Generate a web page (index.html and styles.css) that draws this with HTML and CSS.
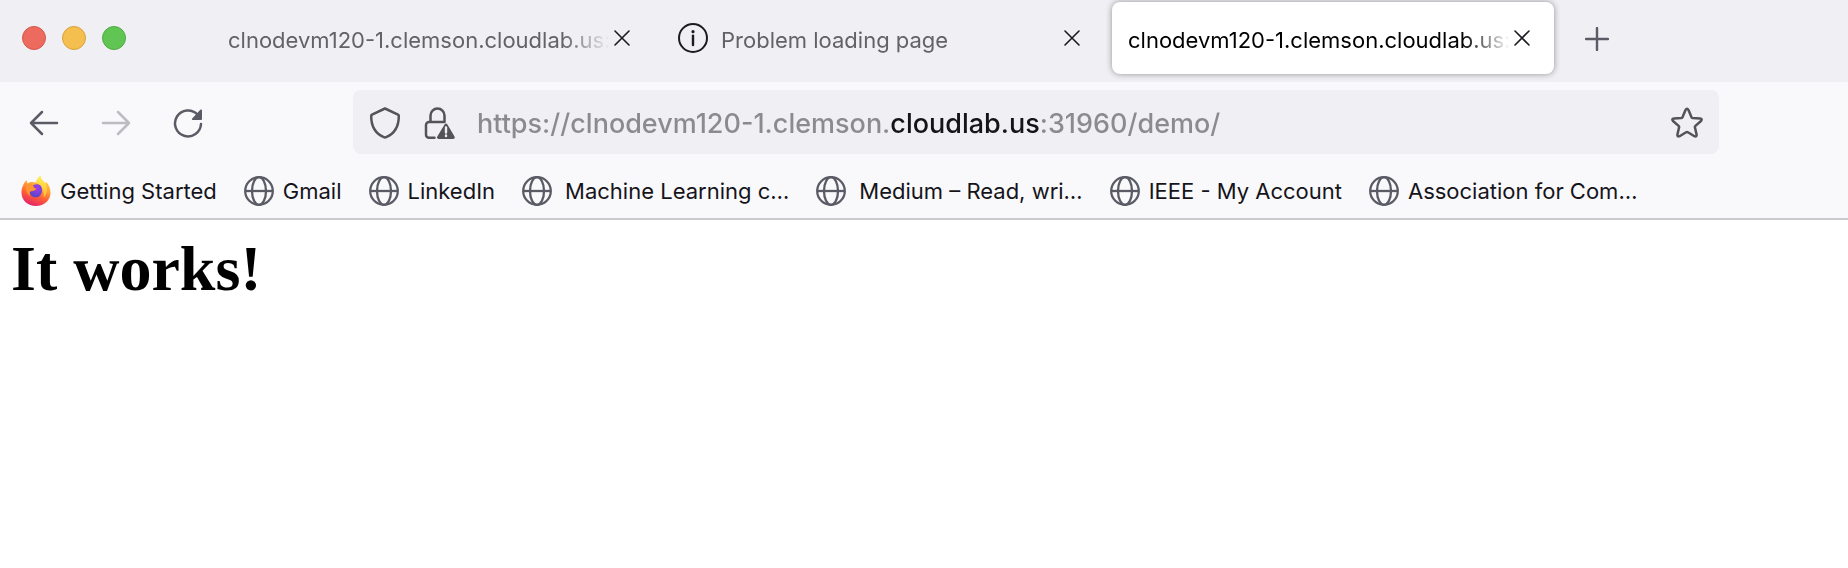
FILE: index.html
```html
<!DOCTYPE html>
<html lang="en">
<head>
<meta charset="utf-8">
<title>It works!</title>
<link rel="stylesheet" href="styles.css">
</head>
<body>
<svg class="symbols" aria-hidden="true">
  <symbol id="close" viewBox="0 0 16 16"><path d="M1 1l14 14M15 1L1 15" fill="none" stroke="currentColor" stroke-width="1.6" stroke-linecap="round"/></symbol>
  <symbol id="globe" viewBox="0 0 30 30"><g fill="none" stroke="currentColor" stroke-width="2.3"><circle cx="15" cy="15" r="13.8"/><ellipse cx="15" cy="15" rx="7" ry="13.8"/><path d="M1 15h28"/></g></symbol>
</svg>
<header class="chrome">
  <div class="tabstrip">
    <div class="window-controls">
      <button class="light light-close" aria-label="Close window"></button>
      <button class="light light-min" aria-label="Minimize window"></button>
      <button class="light light-zoom" aria-label="Zoom window"></button>
    </div>
    <div class="tabs">
      <div class="tab">
        <span class="tab-label">clnodevm120-1.clemson.cloudlab.us:</span>
        <button class="tab-close" aria-label="Close tab"><svg class="icon-close"><use href="#close"/></svg></button>
      </div>
      <div class="tab">
        <svg class="icon-info" viewBox="0 0 30 30" aria-hidden="true"><circle cx="15" cy="15" r="14" fill="none" stroke="currentColor" stroke-width="2"/><circle cx="15" cy="8.7" r="1.6" fill="currentColor"/><path d="M15 12.6v9.4" stroke="currentColor" stroke-width="2.4" stroke-linecap="round"/></svg>
        <span class="tab-label">Problem loading page</span>
        <button class="tab-close" aria-label="Close tab"><svg class="icon-close"><use href="#close"/></svg></button>
      </div>
      <div class="tab tab-active">
        <span class="tab-label">clnodevm120-1.clemson.cloudlab.us:</span>
        <button class="tab-close" aria-label="Close tab"><svg class="icon-close"><use href="#close"/></svg></button>
      </div>
    </div>
    <button class="new-tab" aria-label="New tab"><svg class="icon-plus" viewBox="0 0 24 24"><path d="M12 1v22M1 12h22" stroke="currentColor" stroke-width="2.4" stroke-linecap="round"/></svg></button>
  </div>

  <div class="navbar">
    <div class="nav-buttons">
      <button class="nav-button" aria-label="Back"><svg class="icon-nav" viewBox="0 0 32 32"><path d="M29 16H3M14 5L3 16l11 11" class="line"/></svg></button>
      <button class="nav-button" aria-label="Forward" disabled><svg class="icon-nav" viewBox="0 0 32 32"><path d="M3 16h26M18 5l11 11-11 11" class="line"/></svg></button>
      <button class="nav-button" aria-label="Reload"><svg class="icon-nav" viewBox="0 0 32 32"><path d="M25.500 7.500A13 13 0 1 0 29 17" class="line"/><path d="M30 3.400v8.600a1 1 0 0 1-1 1h-8.100c-.9 0-1.300-1-.7-1.600l8.100-8.600c.6-.6 1.700-.3 1.700.6z" fill="currentColor"/></svg></button>
    </div>
    <div class="urlbar">
      <button class="url-icon" aria-label="Tracking protection"><svg class="icon-url" viewBox="0 0 32 32"><path d="M16 1.500L29 7.600c.5.300.8.700.8 1.300 0 10-4 17.500-12.600 21.200q-1.200.6-2.400 0C6.200 26.400 2.200 18.900 2.200 8.900c0-.6.3-1 .8-1.300z" class="line"/></svg></button>
      <button class="url-icon" aria-label="Site information"><svg class="icon-url" viewBox="0 0 32 32"><path d="M21.500 15v-6.500a7 7 0 0 0-14 0V15M11.500 30.700H6a3 3 0 0 1-3-3V18a3 3 0 0 1 3-3h15.500" class="line"/><path d="M21.700 17.200L14.300 29.600c-.7 1.200 0 2.400 1.300 2.400h14.600c1.300 0 2-1.200 1.300-2.400L24.300 17.200c-.6-1-2-1-2.600 0z" fill="currentColor"/><path d="M23 20.500v5M23 28.500v.6" stroke="#f0eff4" stroke-width="2.400" stroke-linecap="round"/></svg></button>
      <input class="url-input" type="text" aria-label="Address" value="https://clnodevm120-1.clemson.cloudlab.us:31960/demo/">
      <button class="url-icon" aria-label="Bookmark this page"><svg class="icon-url" viewBox="0 0 32 32"><path d="M14.500 3Q16 .3 17.500 3l3 7.200q.3.700 1.100.8l7.400.4q2.700.4 1 2.600l-5.600 4.900q-.6.600-.5 1.400l1.700 7.300q.3 2.700-2.200 1.600l-6.500-3.900q-.9-.5-1.800 0l-6.500 3.900q-2.500 1.100-2.200-1.600l1.700-7.300q.1-.8-.5-1.400L2 14q-1.700-2.200 1-2.600l7.400-.4q.8-.1 1.100-.8z" class="line"/></svg></button>
    </div>
  </div>

  <nav class="bookmarks" aria-label="Bookmarks">
    <a class="bookmark" href="#"><svg class="icon-bookmark" viewBox="0 0 30 31" aria-hidden="true">
      <defs>
        <linearGradient id="fox" x1=".8" y1="0" x2=".4" y2="1"><stop offset="0" stop-color="#ffe44f"/><stop offset=".4" stop-color="#ffa436"/><stop offset=".7" stop-color="#ff5b36"/><stop offset="1" stop-color="#e3256b"/></linearGradient>
        <linearGradient id="flame" x1=".5" y1="0" x2=".4" y2="1"><stop offset="0" stop-color="#fff44f"/><stop offset="1" stop-color="#ffb13c"/></linearGradient>
        <radialGradient id="orb" cx=".6" cy=".3" r=".7"><stop offset="0" stop-color="#a63ce8"/><stop offset="1" stop-color="#5547c8"/></radialGradient>
      </defs>
      <path d="M2.500 8C3 6.500 4.500 5.200 5.500 4.500c0 1.500.3 2.500 1 3.300C10 5 13 6.500 15.500 7 15 4 17.500 1.500 19.500 0c.3 3.500 2.500 4.500 5 7.500.7-.1.800-.7.800-1.500 3.500 3.500 4.700 7.500 4.700 11.200C30 25 23.500 31 15 31S0 25 0 17c0-3.500 1-6.500 2.500-9z" fill="url(#fox)"/>
      <path d="M19.500 0c.3 3.500 2.500 4.500 5 7.500 3 4 2 12-1.500 15 .5-6-1-12-7.500-15.500C15 4 17.500 1.500 19.500 0z" fill="url(#flame)"/>
      <path d="M12 9.500c4-2 7.500-1 8.500 1.500 2 5-.5 11-5.500 11s-6.500-3-6.300-6c1.600-.2 4.800-.5 5.800-2.300-1.300-.2-2.700-1.700-2.500-4.200z" fill="url(#orb)"/>
      <path d="M5 9c2.500-2 5-1.500 7 .2 0 2 1.300 3.600 3.500 3.900-1.300 2.100-5 1.900-6.500 2.900-1.300.9-.8 3.300.7 4.500-4-1-6-6.500-4.700-11.500z" fill="#ff9433"/>
    </svg><span class="bookmark-label">Getting Started</span></a>
    <a class="bookmark" href="#"><svg class="icon-bookmark" aria-hidden="true"><use href="#globe"/></svg><span class="bookmark-label">Gmail</span></a>
    <a class="bookmark" href="#"><svg class="icon-bookmark" aria-hidden="true"><use href="#globe"/></svg><span class="bookmark-label">LinkedIn</span></a>
    <a class="bookmark" href="#"><svg class="icon-bookmark" aria-hidden="true"><use href="#globe"/></svg><span class="bookmark-label cropped">Machine Learning c…</span></a>
    <a class="bookmark" href="#"><svg class="icon-bookmark" aria-hidden="true"><use href="#globe"/></svg><span class="bookmark-label cropped">Medium – Read, wri…</span></a>
    <a class="bookmark" href="#"><svg class="icon-bookmark" aria-hidden="true"><use href="#globe"/></svg><span class="bookmark-label">IEEE - My Account</span></a>
    <a class="bookmark" href="#"><svg class="icon-bookmark" aria-hidden="true"><use href="#globe"/></svg><span class="bookmark-label">Association for Com…</span></a>
  </nav>
</header>
<main class="page">
  <h1 class="page-title">It works!</h1>
</main>
</body>
</html>
```
FILE: styles.css
```css
* {
  box-sizing: border-box;
}

body {
  margin: 0;
  background: #fff;
  color: #15141a;
  font-family: Inter, "Liberation Sans", sans-serif;
  font-size: 22px;
}

button {
  display: flex;
  align-items: center;
  justify-content: center;
  padding: 0;
  border: 0;
  background: none;
  color: #5b5b66;
}

.symbols {
  position: absolute;
  width: 0;
  height: 0;
}

.line {
  fill: none;
  stroke: currentColor;
  stroke-width: 2.5;
  stroke-linecap: round;
  stroke-linejoin: round;
}

.chrome {
  background: #f9f9fb;
  border-bottom: 2px solid #cbcbcd;
}

/* Tab strip */
.tabstrip {
  display: flex;
  align-items: flex-start;
  height: 82px;
  padding: 2px 22px 0;
  background: #f0eff4;
}

.window-controls {
  display: flex;
  align-items: center;
  gap: 16px;
  width: 190px;
  height: 72px;
}

.light {
  width: 24px;
  height: 24px;
  border: 1px solid;
  border-radius: 50%;
}

.light-close {
  background: #ed6a5e;
  border-color: #d5564b;
}

.light-min {
  background: #f5bf4f;
  border-color: #d9a23c;
}

.light-zoom {
  background: #61c554;
  border-color: #4faa41;
}

.tabs {
  display: flex;
  flex: 0 1 1342px;
  gap: 8px;
  min-width: 0;
}

.tab {
  display: flex;
  flex: 1;
  align-items: center;
  min-width: 0;
  height: 72px;
  padding: 0 20px 0 16px;
  border-radius: 8px;
  color: #636266;
}

.tab-active {
  background: #fff;
  color: #000;
  box-shadow: 0 0 6px rgba(0, 0, 0, 0.4);
}

.tab-label {
  flex: 1;
  min-width: 0;
  padding-top: 4px;
  overflow: hidden;
  white-space: nowrap;
  -webkit-mask-image: linear-gradient(to left, transparent, #000 48px);
  mask-image: linear-gradient(to left, transparent, #000 48px);
}

.icon-info {
  flex: none;
  width: 30px;
  height: 30px;
  margin-right: 13px;
  color: #1c1b20;
}

.tab-close {
  flex: none;
  width: 24px;
  height: 24px;
  color: #1c1b20;
}

.icon-close {
  width: 16px;
  height: 16px;
}

.new-tab {
  width: 56px;
  height: 74px;
  margin-left: 15px;
}

.icon-plus {
  width: 24px;
  height: 24px;
}

/* Navigation bar */
.navbar {
  display: flex;
  align-items: center;
  padding: 8px 129px 8px 8px;
}

.nav-buttons {
  display: flex;
  width: 345px;
  padding-top: 2px;
}

.nav-button {
  width: 72px;
  height: 62px;
}

.nav-button:disabled {
  color: #bcbcc2;
}

.icon-nav,
.icon-url {
  width: 32px;
  height: 32px;
}

.urlbar {
  display: flex;
  flex: 1;
  align-items: center;
  min-width: 0;
  height: 64px;
  padding: 2px 5px 0;
  border-radius: 8px;
  background: #f0eff4;
}

.url-icon {
  flex: none;
  width: 54px;
  height: 54px;
  color: #545359;
}

/* The registrable domain is drawn darker than the rest of the address. */
.url-input {
  flex: 1;
  min-width: 0;
  height: 54px;
  margin-left: 11px;
  padding: 0;
  border: 0;
  outline: 0;
  background: linear-gradient(90deg, #8b8a90 414px, #15141a 414px 564px, #8b8a90 564px);
  -webkit-background-clip: text;
  background-clip: text;
  color: transparent;
  font: inherit;
  font-size: 27px;
  font-weight: 500;
}

/* Bookmarks */
.bookmarks {
  display: flex;
  align-items: center;
  gap: 27px;
  height: 56px;
  padding: 2px 21px 0;
}

.bookmark {
  display: flex;
  align-items: center;
  gap: 9px;
  color: inherit;
  text-decoration: none;
  white-space: nowrap;
}

.icon-bookmark {
  flex: none;
  width: 30px;
  height: 30px;
  color: #5b5b66;
}

.cropped {
  padding-left: 4px;
}

/* Page */
.page {
  padding: 12px 11px;
}

.page-title {
  margin: 0;
  color: #000;
  font: bold 64px/74px "Liberation Serif", serif;
}
```
